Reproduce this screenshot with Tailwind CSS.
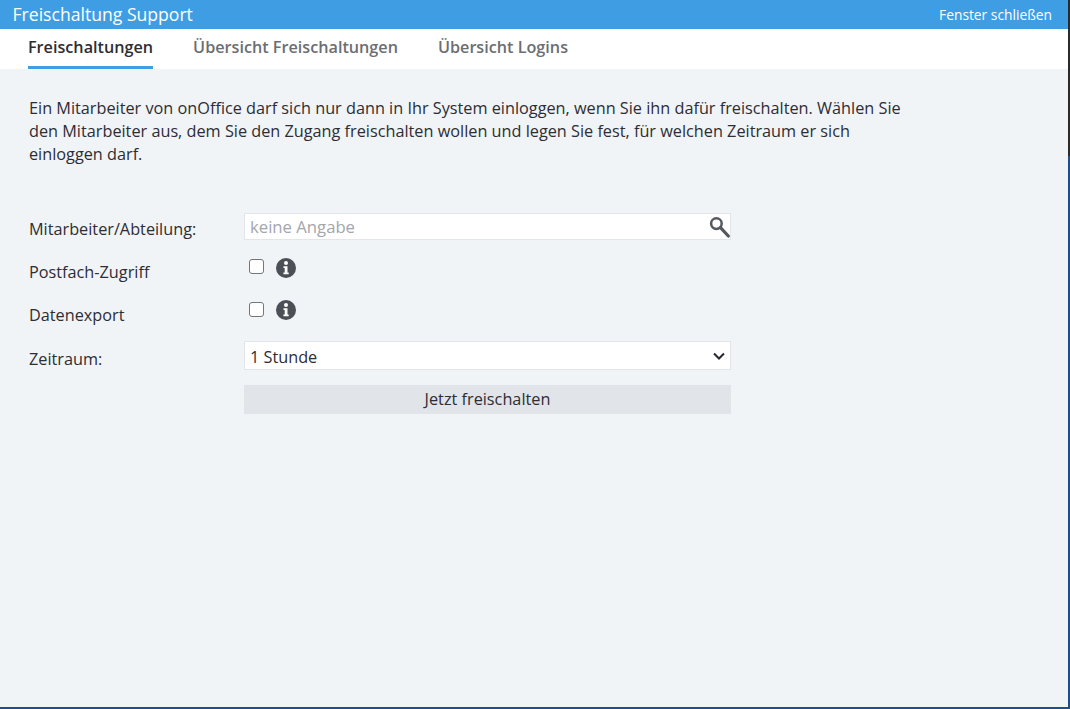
<!DOCTYPE html>
<html lang="de"><head><meta charset="utf-8"><script src="https://cdn.jsdelivr.net/npm/@tailwindcss/browser@4"></script></head>
<body class="m-0 overflow-hidden bg-white">
<div class="relative w-[1070px] h-[709px] font-['Open_Sans',sans-serif] text-[#2d2d33] bg-[#f0f4f7] flex flex-col border-b-2 border-[#1f4e8c] box-border">
  <div class="absolute right-0 top-0 bottom-0 w-[2px] bg-[#1f4e8c]"></div>
  <div class="absolute right-0 top-0 h-[156px] w-[2px] bg-[#2b2b2b]"></div>
  <header class="h-[29px] shrink-0 bg-[#3f9de4] text-white flex items-center justify-between pl-[12.5px] pr-[18px]">
    <span class="text-[17.6px] leading-[29px]">Freischaltung Support</span>
    <span class="text-[13.8px] leading-[29px]">Fenster schließen</span>
  </header>
  <nav class="h-[40px] shrink-0 bg-white flex gap-[40px] pl-[28px] text-[16.2px] font-semibold text-[#6b6e72]">
    <a class="h-[40px] leading-[37px] border-b-[3px] border-[#3f9de4] text-[#2d2d33]">Freischaltungen</a>
    <a class="h-[40px] leading-[37px]">Übersicht Freischaltungen</a>
    <a class="h-[40px] leading-[37px]">Übersicht Logins</a>
  </nav>
  <main class="pl-[29px] pt-[28px] text-[16.25px]">
    <p class="w-[890px] leading-[23px] m-0">Ein Mitarbeiter von onOffice darf sich nur dann in Ihr System einloggen, wenn Sie ihn dafür freischalten. Wählen Sie den Mitarbeiter aus, dem Sie den Zugang freischalten wollen und legen Sie fest, für welchen Zeitraum er sich einloggen darf.</p>
    <div class="mt-[47px] flex flex-col">
      <div class="flex items-start h-[27px] mb-[15px]">
        <label class="w-[215px] pt-[4px] leading-[24px]">Mitarbeiter/Abteilung:</label>
        <div class="w-[487px] h-[27px] bg-white border border-[#e2e5ea] flex items-center justify-between pl-[5px] box-border">
          <span class="text-[#a3a6ac] text-[16.7px] pt-[1px]">keine Angabe</span>
          <svg class="w-[22px] h-[22px] shrink-0" viewBox="0 0 22 22" fill="none" stroke="#55585e"><circle cx="8.4" cy="7.6" r="5.3" stroke-width="2.5"/><path d="M12.5 11.7L20.3 20" stroke-width="3.2" stroke-linecap="round"/></svg>
        </div>
      </div>
      <div class="flex items-start h-[24px] mb-[19px]">
        <label class="w-[215px] pt-[5px] leading-[24px]">Postfach-Zugriff</label>
        <div class="flex items-center gap-[12px] pl-[5px] h-[24px]">
          <span class="block w-[15px] h-[15px] -mt-[1px] rounded-[3px] bg-white border border-[#767676]"></span>
          <svg class="w-[20px] h-[20px] mt-[2px]" viewBox="0 0 20 20"><circle cx="10" cy="10" r="10" fill="#4b4f56"/><circle cx="10" cy="5" r="2" fill="#fff"/><path d="M7.5 8.2h4v6.2h1.2v1.8H7.4v-1.8h1.3v-4.4H7.5z" fill="#fff"/></svg>
        </div>
      </div>
      <div class="flex items-start h-[24px] mb-[19px]">
        <label class="w-[215px] pt-[5px] leading-[24px]">Datenexport</label>
        <div class="flex items-center gap-[12px] pl-[5px] h-[24px]">
          <span class="block w-[15px] h-[15px] -mt-[1px] rounded-[3px] bg-white border border-[#767676]"></span>
          <svg class="w-[20px] h-[20px]" viewBox="0 0 20 20"><circle cx="10" cy="10" r="10" fill="#4b4f56"/><circle cx="10" cy="5" r="2" fill="#fff"/><path d="M7.5 8.2h4v6.2h1.2v1.8H7.4v-1.8h1.3v-4.4H7.5z" fill="#fff"/></svg>
        </div>
      </div>
      <div class="flex items-start h-[29px] mb-[15px]">
        <label class="w-[215px] pt-[6px] leading-[24px]">Zeitraum:</label>
        <div class="w-[487px] h-[29px] bg-white border border-[#e2e5ea] flex items-center justify-between px-[5px] box-border">
          <span class="pt-[3px]">1 Stunde</span>
          <svg class="w-[12px] h-[8px]" viewBox="0 0 12 8" fill="none" stroke="#26262c" stroke-width="2"><path d="M1 1.5l5 5 5-5"/></svg>
        </div>
      </div>
      <div class="flex">
        <div class="w-[215px]"></div>
        <button class="w-[487px] h-[29px] bg-[#e1e4e9] text-[16.25px] text-[#2d2d33] leading-[29px]">Jetzt freischalten</button>
      </div>
    </div>
  </main>
</div>
</body></html>
